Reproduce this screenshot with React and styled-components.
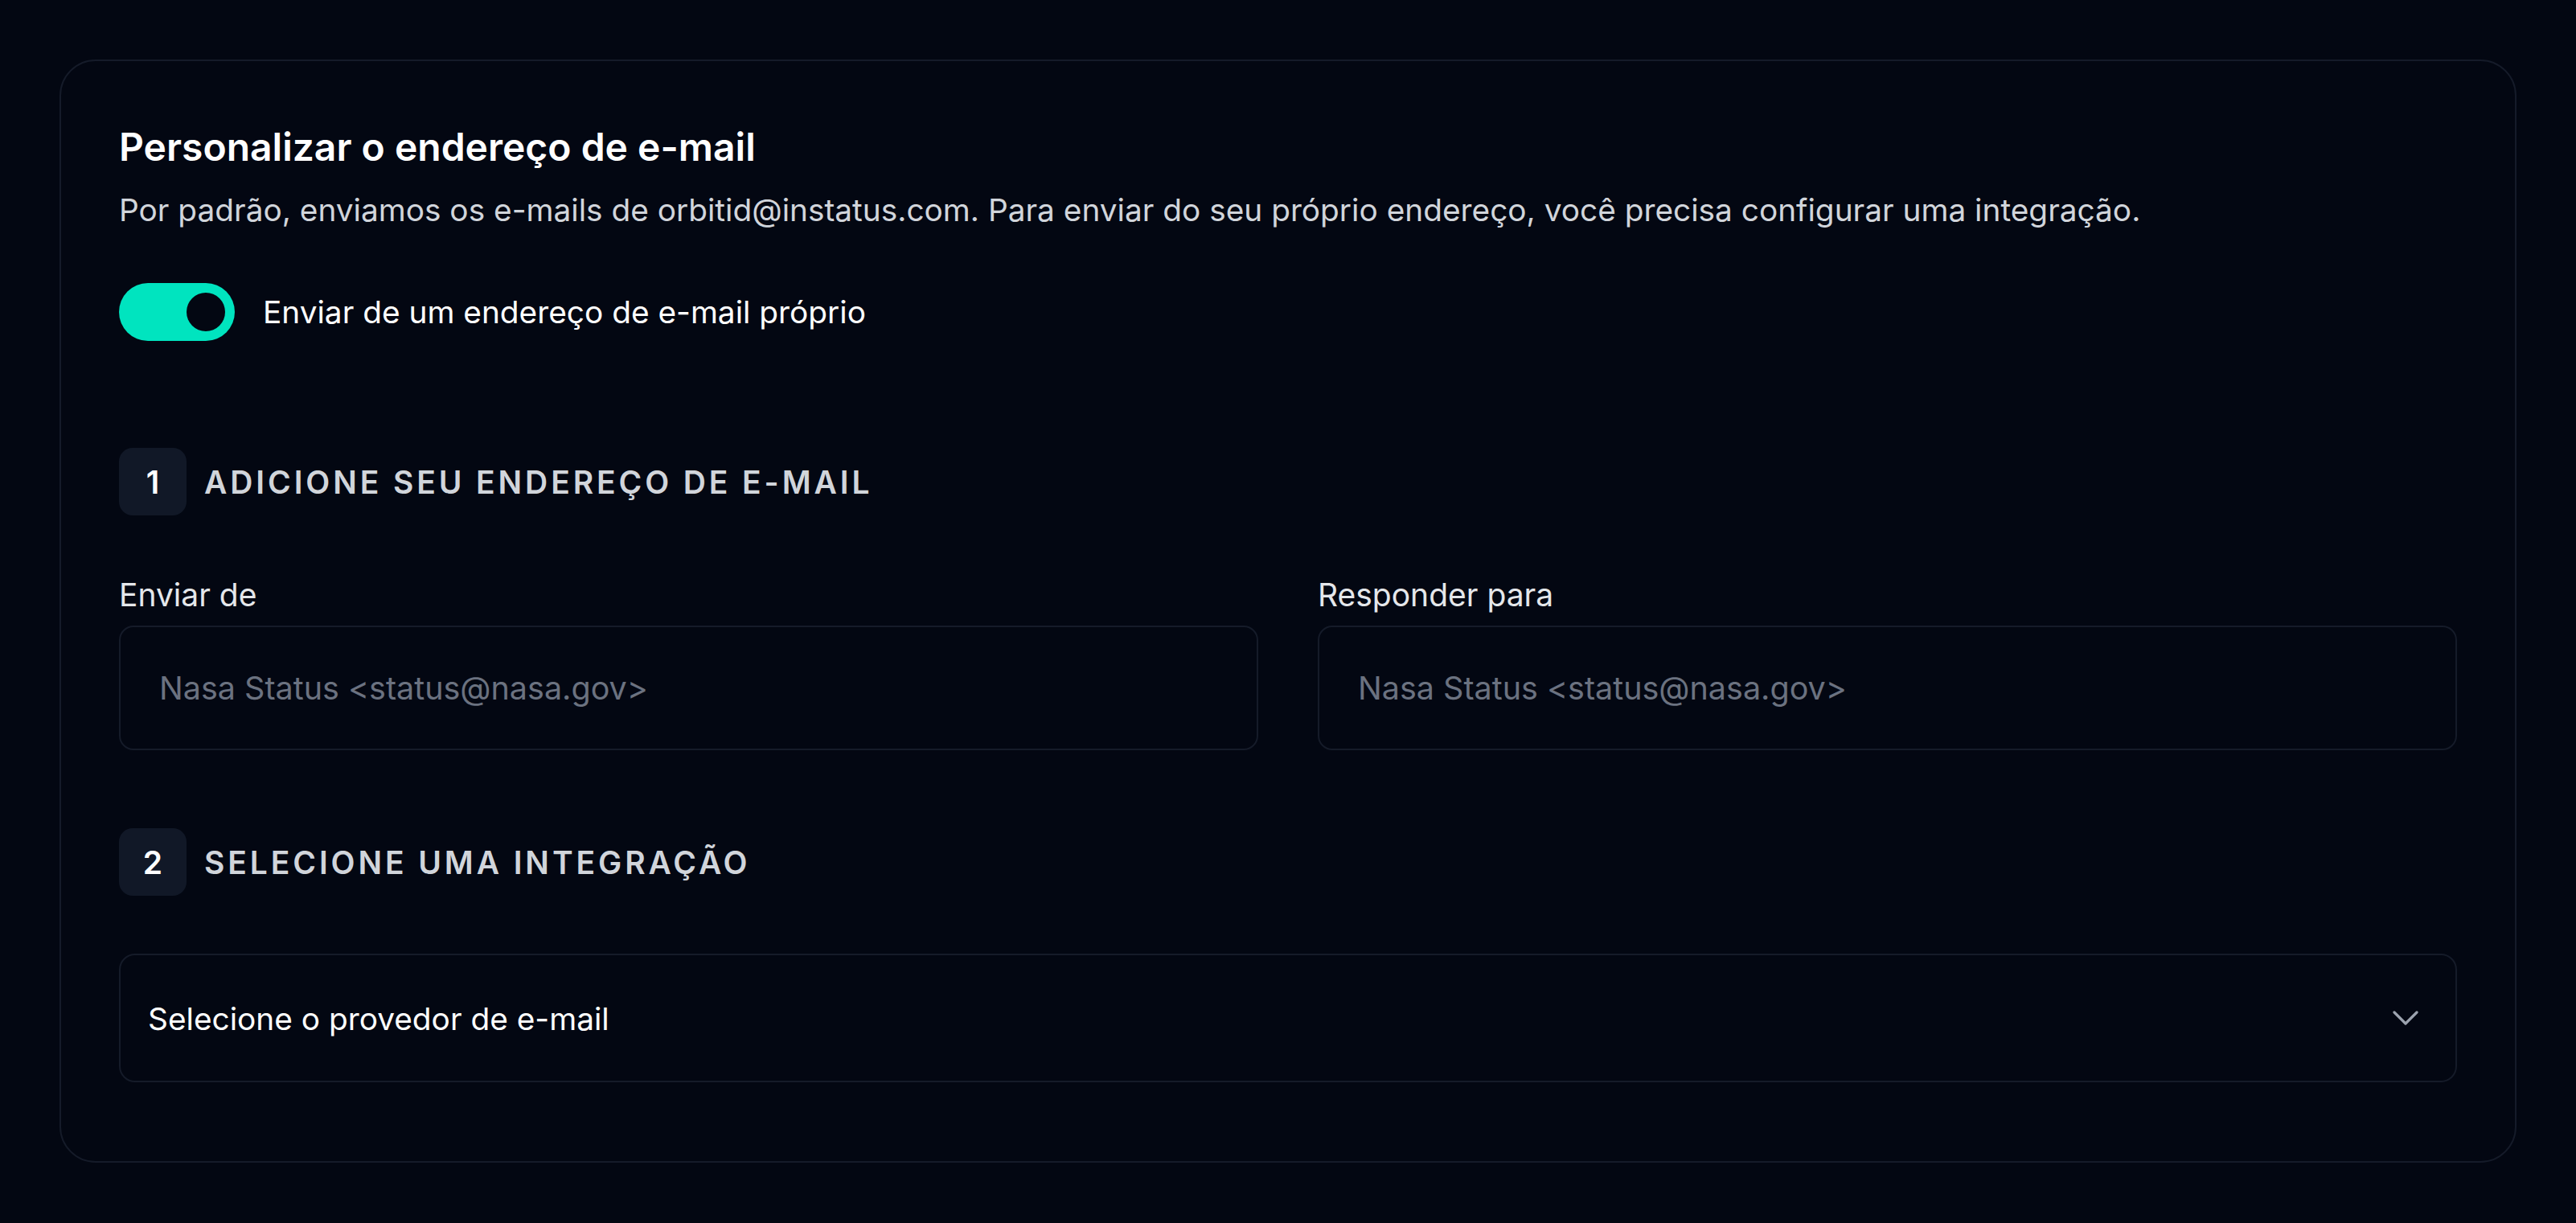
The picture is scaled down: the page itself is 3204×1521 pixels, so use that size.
import React, { useState } from "react";
import styled, { createGlobalStyle } from "styled-components";

const GlobalStyle = createGlobalStyle`
  html, body {
    margin: 0;
    padding: 0;
    background: #030712;
  }
  body {
    font-family: Inter, "Noto Sans", sans-serif;
    color: #ffffff;
  }
  * {
    box-sizing: border-box;
  }
`;

const Page = styled.div`
  min-height: 1521px;
  padding: 74px 74px;
  background: #030712;
`;

const Card = styled.section`
  border: 2px solid #151b29;
  border-radius: 45px;
  padding: 73px 72px 98px 72px;
`;

const Title = styled.h2`
  margin: 0;
  font-size: 48px;
  line-height: 67px;
  font-weight: 600;
  color: #ffffff;
`;

const Description = styled.p`
  margin: 18px 0 0 0;
  font-size: 38.8px;
  line-height: 54px;
  color: #d1d5db;
`;

const ToggleRow = styled.label`
  display: flex;
  align-items: center;
  gap: 35px;
  margin-top: 64px;
  cursor: pointer;
`;

const Track = styled.button`
  position: relative;
  width: 144px;
  height: 72px;
  border: none;
  border-radius: 36px;
  padding: 0;
  background: ${(p) => (p.$on ? "#00e4bf" : "#1f2937")};
  cursor: pointer;
  flex-shrink: 0;
`;

const Knob = styled.span`
  position: absolute;
  top: 12px;
  left: ${(p) => (p.$on ? "84px" : "12px")};
  width: 48px;
  height: 48px;
  border-radius: 50%;
  background: #030712;
`;

const ToggleLabel = styled.span`
  font-size: 38.8px;
  line-height: 54px;
  color: #ffffff;
`;

const StepHeading = styled.div`
  display: flex;
  align-items: center;
  gap: 22px;
  margin-top: ${(p) => p.$top}px;
`;

const StepBadge = styled.span`
  display: flex;
  align-items: center;
  justify-content: center;
  width: 84px;
  height: 84px;
  border-radius: 17px;
  background: #111827;
  font-size: 39px;
  font-weight: 600;
  color: #ffffff;
`;

const StepTitle = styled.h3`
  margin: 0;
  font-size: 39px;
  font-weight: 600;
  letter-spacing: 0.1em;
  text-transform: uppercase;
  color: #d1d5db;
`;

const FieldGrid = styled.div`
  display: grid;
  grid-template-columns: 1fr 1fr;
  gap: 74px;
  margin-top: 72px;
`;

const Field = styled.div`
  display: flex;
  flex-direction: column;
  gap: 11px;
`;

const FieldLabel = styled.label`
  font-size: 39px;
  line-height: 54px;
  color: #e5e7eb;
`;

const TextInput = styled.input`
  width: 100%;
  height: 155px;
  padding: 0 48px;
  border: 2px solid #151b29;
  border-radius: 18px;
  background: #030712;
  font-family: Inter, "Noto Sans", sans-serif;
  font-size: 39.5px;
  color: #ffffff;
  outline: none;

  &::placeholder {
    color: #6b7280;
  }
`;

const Select = styled.button`
  display: flex;
  align-items: center;
  justify-content: space-between;
  width: 100%;
  height: 160px;
  margin-top: 72px;
  padding: 0 46px 0 34px;
  border: 2px solid #151b29;
  border-radius: 20px;
  background: #030712;
  font-family: Inter, "Noto Sans", sans-serif;
  font-size: 38.8px;
  color: #ffffff;
  text-align: left;
  cursor: pointer;
`;

const Chevron = () => (
  <svg width="32" height="19" viewBox="0 0 32 19" fill="none">
    <path
      d="M2 2 L16 16 L30 2"
      stroke="#9ca3af"
      strokeWidth="3.2"
      strokeLinecap="round"
      strokeLinejoin="round"
    />
  </svg>
);

export default function App() {
  const [customSender, setCustomSender] = useState(true);

  return (
    <Page>
      <GlobalStyle />
      <Card>
        <Title>Personalizar o endereço de e-mail</Title>
        <Description>
          Por padrão, enviamos os e-mails de orbitid@instatus.com. Para enviar
          do seu próprio endereço, você precisa configurar uma integração.
        </Description>

        <ToggleRow>
          <Track
            type="button"
            $on={customSender}
            onClick={() => setCustomSender(!customSender)}
          >
            <Knob $on={customSender} />
          </Track>
          <ToggleLabel>Enviar de um endereço de e-mail próprio</ToggleLabel>
        </ToggleRow>

        <StepHeading $top={133}>
          <StepBadge>1</StepBadge>
          <StepTitle>Adicione seu endereço de e-mail</StepTitle>
        </StepHeading>

        <FieldGrid>
          <Field>
            <FieldLabel>Enviar de</FieldLabel>
            <TextInput placeholder="Nasa Status <status@nasa.gov>" />
          </Field>
          <Field>
            <FieldLabel>Responder para</FieldLabel>
            <TextInput placeholder="Nasa Status <status@nasa.gov>" />
          </Field>
        </FieldGrid>

        <StepHeading $top={97}>
          <StepBadge>2</StepBadge>
          <StepTitle>Selecione uma integração</StepTitle>
        </StepHeading>

        <Select type="button">
          <span>Selecione o provedor de e-mail</span>
          <Chevron />
        </Select>
      </Card>
    </Page>
  );
}
